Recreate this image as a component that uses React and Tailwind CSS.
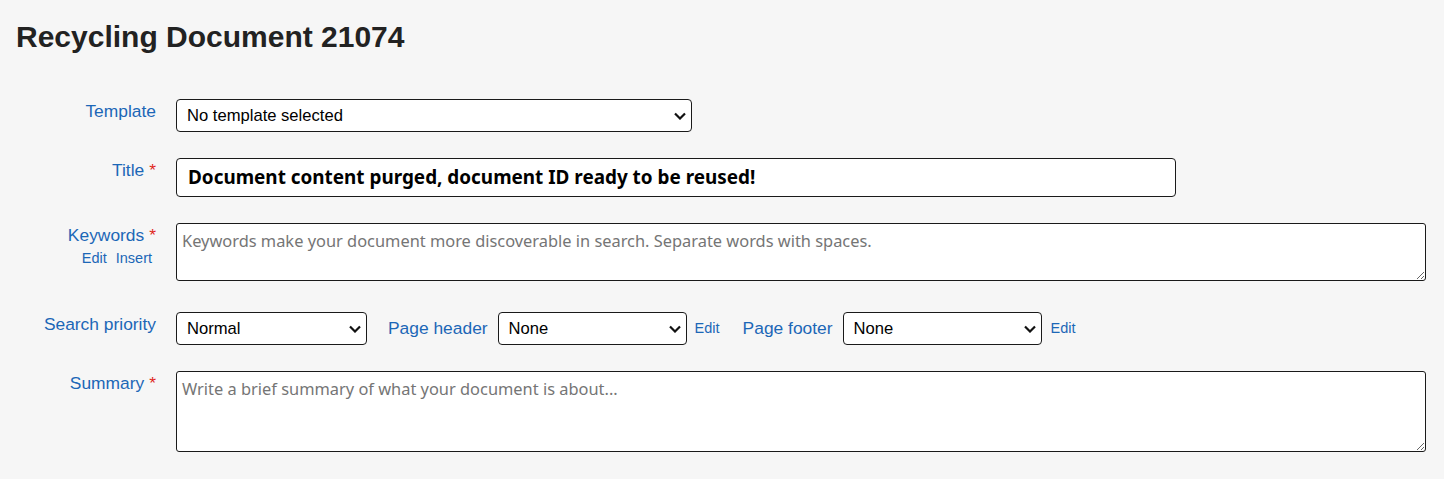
const Req = () => <span className="ml-[5px] text-[#e0251b]">*</span>;

const Chevron = () => (
  <svg
    className="absolute right-[5px] top-1/2 -translate-y-1/2"
    width="12"
    height="8"
    viewBox="0 0 12 8"
    fill="none"
  >
    <path d="M1 1.5 L6 6.5 L11 1.5" stroke="#111" strokeWidth="2.2" />
  </svg>
);

const Select = ({ value, width }) => {
  return (
    <div
      className={`relative flex h-[33px] shrink-0 items-center rounded-[4px] border border-[#1a1a1a] bg-white ${width}`}
    >
      <span className="pl-[10px] pt-[2px] text-[16.6px] text-black">{value}</span>
      <Chevron />
    </div>
  );
};

const Label = ({ children }) => (
  <div className="mt-[2px] text-right text-[17.4px] leading-[20px] text-[#1c67b7]">
    {children}
  </div>
);

const segoe = { fontFamily: '"Noto Sans", "Open Sans", sans-serif' };

export default function App() {
  return (
    <div
      className="min-h-[479px] w-full bg-[#f6f6f6] text-[#222]"
      style={{ fontFamily: '"Liberation Sans", Arial, sans-serif' }}
    >
      <h1 className="pl-[16px] pt-[19px] text-[30px] font-bold leading-[36px] text-[#222]">
        Recycling Document 21074
      </h1>

      <div className="mt-[44px] grid grid-cols-[156px_1fr] gap-x-[20px]">
        {/* template */}
        <Label>Template</Label>
        <div className="mb-[26px]">
          <Select value="No template selected" width="w-[516px]" />
        </div>

        {/* title */}
        <Label>
          Title
          <Req />
        </Label>
        <div className="mb-[26px]">
          <div
            className="flex h-[39px] w-[1000px] items-center rounded-[4px] border border-[#1a1a1a] bg-white pl-[11px] text-[18.9px] font-bold text-black"
            style={segoe}
          >
            Document content purged, document ID ready to be reused!
          </div>
        </div>

        {/* keywords */}
        <div className="mt-[2px] flex flex-col items-end">
          <div className="text-[17.4px] leading-[20px] text-[#1c67b7]">
            Keywords
            <Req />
          </div>
          <div className="mt-[5px] mr-[4px] flex gap-[9px] text-[14.5px] leading-[16px] text-[#1c67b7]">
            <span>Edit</span>
            <span>Insert</span>
          </div>
        </div>
        <div className="mb-[31px]">
          <textarea
            className="block h-[58px] w-[1250px] rounded-[3px] border border-[#1a1a1a] bg-white px-[5px] pb-[6px] pt-[7px] text-[16.4px] leading-[20px] placeholder:text-[#757575]"
            style={segoe}
            placeholder="Keywords make your document more discoverable in search. Separate words with spaces."
          />
        </div>

        {/* search priority / header / footer */}
        <Label>Search priority</Label>
        <div className="mb-[26px] flex items-center">
          <Select value="Normal" width="w-[191px]" />
          <span className="ml-[21px] text-[17.4px] text-[#1c67b7]">Page header</span>
          <div className="ml-[10px]">
            <Select value="None" width="w-[189px]" />
          </div>
          <span className="ml-[8px] text-[14.5px] text-[#1c67b7]">Edit</span>
          <span className="ml-[23px] text-[17.4px] text-[#1c67b7]">Page footer</span>
          <div className="ml-[10px]">
            <Select value="None" width="w-[199px]" />
          </div>
          <span className="ml-[9px] text-[14.5px] text-[#1c67b7]">Edit</span>
        </div>

        {/* summary */}
        <Label>
          Summary
          <Req />
        </Label>
        <div>
          <textarea
            className="block h-[81px] w-[1250px] rounded-[3px] border border-[#1a1a1a] bg-white px-[5px] pb-[6px] pt-[7px] text-[16.4px] leading-[20px] placeholder:text-[#757575]"
            style={segoe}
            placeholder="Write a brief summary of what your document is about..."
          />
        </div>
      </div>
    </div>
  );
}
